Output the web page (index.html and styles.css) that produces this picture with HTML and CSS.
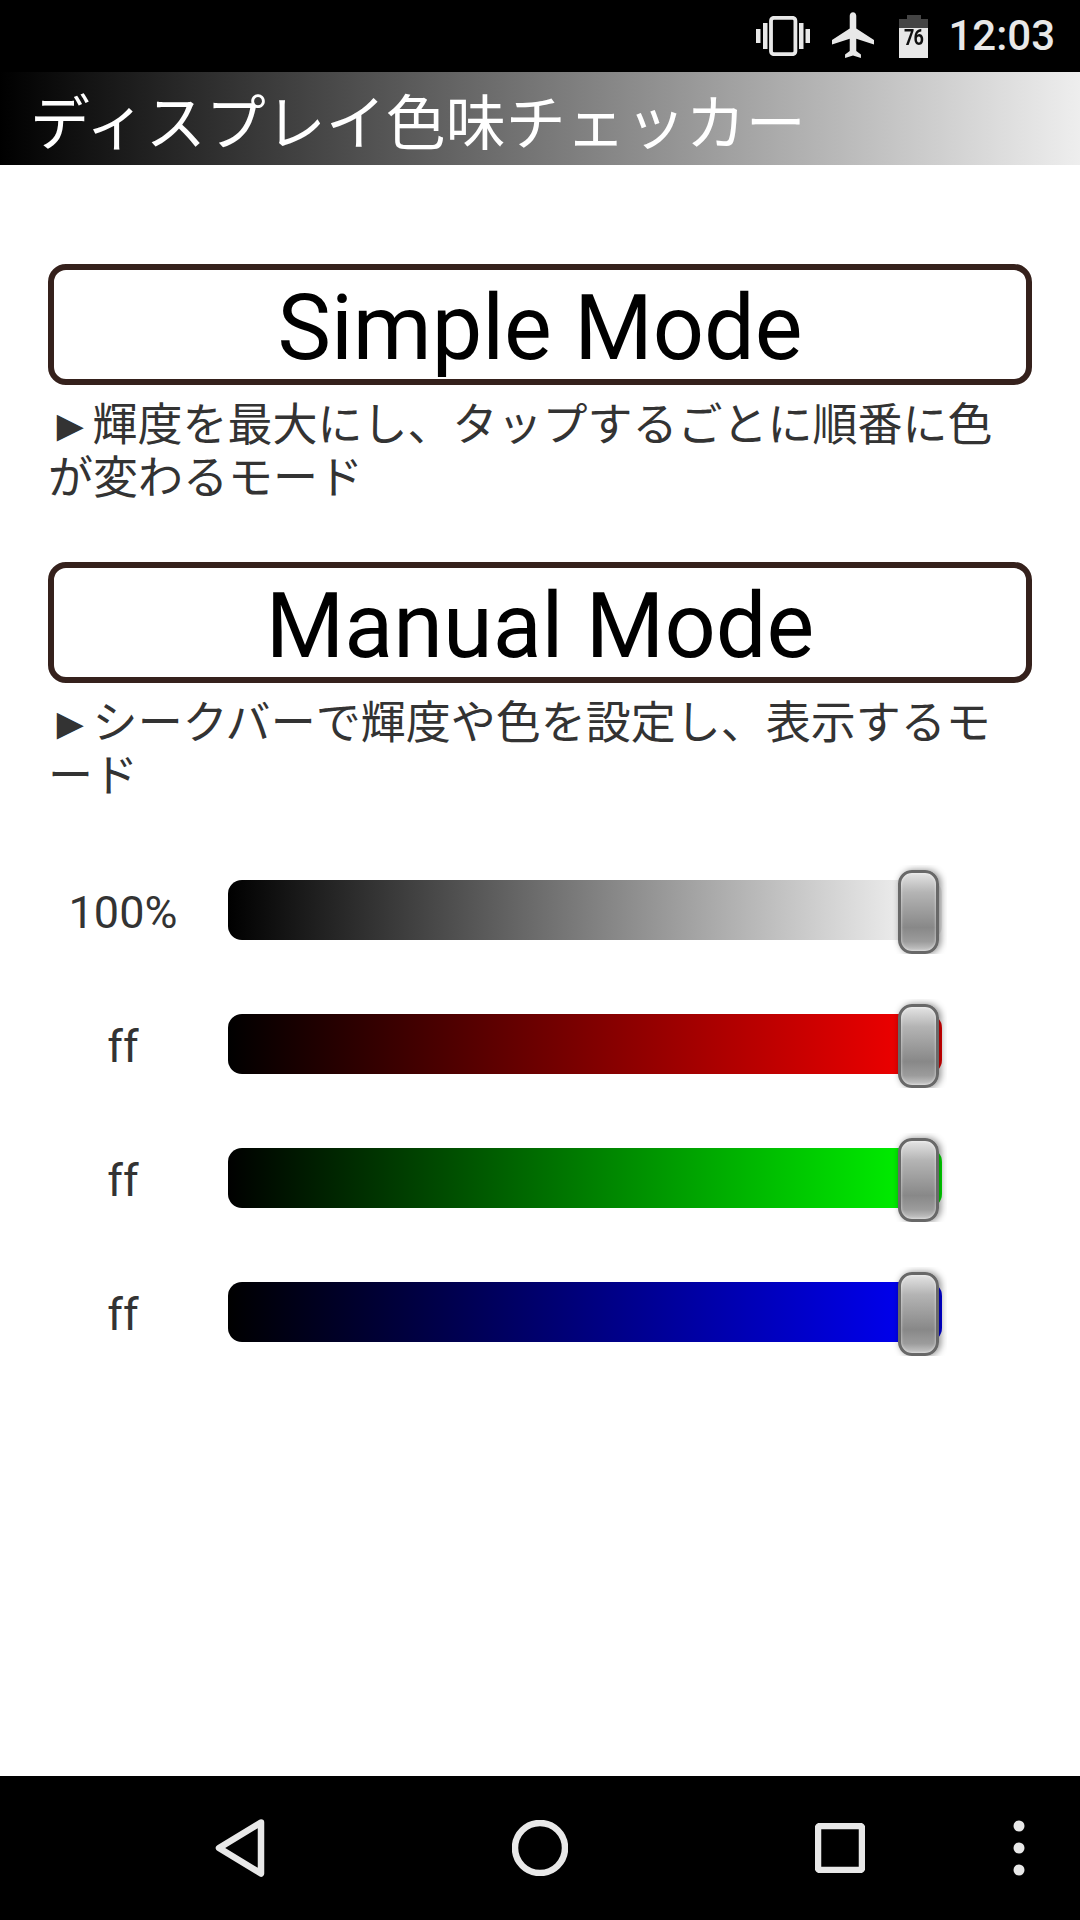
FILE: index.html
```html
<!DOCTYPE html>
<html lang="ja">
<head>
<meta charset="utf-8">
<title>ディスプレイ色味チェッカー</title>
<link rel="stylesheet" href="styles.css">
</head>
<body>
<div class="screen">
  <header class="status">
    <svg class="ic-vibrate" viewBox="0 0 54 40" width="54" height="40">
      <rect x="15" y="1.8" width="24.4" height="36.4" rx="3" fill="none" stroke="#e8e8e8" stroke-width="3.8"/>
      <rect x="7" y="7" width="4.5" height="26" fill="#e8e8e8"/>
      <rect x="43" y="7" width="4.5" height="26" fill="#e8e8e8"/>
      <rect x="0" y="13" width="4.5" height="14" fill="#e8e8e8"/>
      <rect x="49.5" y="13" width="4.5" height="14" fill="#e8e8e8"/>
    </svg>
    <svg class="ic-plane" viewBox="0 0 24 24" width="56" height="56">
      <path fill="#e8e8e8" d="M21 15.6v-1.9l-7.6-4.9V3.3c0-.8-.6-1.5-1.4-1.5s-1.4.7-1.4 1.5v5.5L3 13.7v1.9l7.6-2.4v5.2l-2 1.5v1.5l3.4-1 3.4 1v-1.5l-2-1.5v-5.2z"/>
    </svg>
    <div class="battery">
      <div class="bat-cap"></div>
      <div class="bat-top"></div>
      <div class="bat-body"><span class="bat-num">76</span></div>
    </div>
    <span class="clock">12:03</span>
  </header>
  <div class="titlebar">ディスプレイ色味チェッカー</div>
  <main class="content">
    <div class="mode-btn">Simple Mode</div>
    <p class="desc">►輝度を最大にし、タップするごとに順番に色<br>が変わるモード</p>
    <div class="mode-btn second">Manual Mode</div>
    <p class="desc">►<span class="loose">シークバー</span>で輝度や色を設定し、表示するモ<br>ード</p>
    <section class="sliders">
      <div class="row">
        <span class="val">100%</span>
        <div class="track grey"><div class="clip"><div class="thumb"></div></div></div>
      </div>
      <div class="row">
        <span class="val">ff</span>
        <div class="track red"><div class="clip"><div class="thumb"></div></div></div>
      </div>
      <div class="row">
        <span class="val">ff</span>
        <div class="track green"><div class="clip"><div class="thumb"></div></div></div>
      </div>
      <div class="row">
        <span class="val">ff</span>
        <div class="track blue"><div class="clip"><div class="thumb"></div></div></div>
      </div>
    </section>
  </main>
  <footer class="nav">
    <svg class="nav-back" viewBox="0 0 50 58" width="50" height="58">
      <path d="M46 3.5 L4 29 L46 54.5 Z" fill="none" stroke="#e8e8e8" stroke-width="6.5" stroke-linejoin="round"/>
    </svg>
    <svg class="nav-home" viewBox="0 0 56 56" width="56" height="56">
      <circle cx="28" cy="28" r="25" fill="none" stroke="#e8e8e8" stroke-width="6.5"/>
    </svg>
    <svg class="nav-recent" viewBox="0 0 50 50" width="50" height="50">
      <rect x="3" y="3" width="44" height="44" rx="2" fill="none" stroke="#e8e8e8" stroke-width="6.5"/>
    </svg>
    <svg class="nav-menu" viewBox="0 0 12 56" width="12" height="56">
      <circle cx="6" cy="6" r="5.5" fill="#e8e8e8"/>
      <circle cx="6" cy="28" r="5.5" fill="#e8e8e8"/>
      <circle cx="6" cy="50" r="5.5" fill="#e8e8e8"/>
    </svg>
  </footer>
</div>
</body>
</html>
```
FILE: styles.css
```css
* { box-sizing: border-box; }
html, body { margin: 0; padding: 0; background: #fff; }
.screen {
  width: 1080px;
  height: 1920px;
  display: flex;
  flex-direction: column;
  overflow: hidden;
  font-family: Roboto, "Noto Sans CJK JP", sans-serif;
}
.status {
  height: 72px;
  background: #000;
  display: flex;
  align-items: center;
  padding-right: 25px;
  justify-content: flex-end;
}
.ic-vibrate { margin-right: 15px; }
.ic-plane { margin-right: 18px; }
.battery {
  width: 29px;
  height: 43px;
  display: flex;
  flex-direction: column;
  align-items: center;
  margin-right: 20px;
}
.bat-cap { width: 14px; height: 4px; background: #444; }
.bat-top { width: 100%; height: 9px; background: #444; }
.bat-body {
  width: 100%;
  flex: 1;
  background: #e8e8e8;
  display: flex;
  justify-content: center;
}
.bat-num {
  font: 700 22px/20px Roboto, sans-serif;
  color: #111;
  letter-spacing: -1px;
  transform: scaleX(.82);
}
.clock {
  font: 500 42px/72px Roboto, sans-serif;
  color: #e8e8e8;
}
.titlebar {
  height: 93px;
  padding-left: 30px;
  background: linear-gradient(to right, #000, #eee);
  color: #fff;
  font: 400 60px/93px "Noto Sans CJK JP", sans-serif;
  white-space: nowrap;
}
.content {
  flex: 1;
  padding: 99px 48px 0;
}
.mode-btn {
  height: 121px;
  border: 6px solid #35211c;
  border-radius: 18px;
  text-align: center;
  color: #000;
  font: 400 90px/117px Roboto, sans-serif;
}
.second { margin-top: 61px; }
.desc {
  margin: 10px 0 0;
  color: #333;
  font: 400 45px/53px "Noto Sans CJK JP", sans-serif;
  white-space: nowrap;
}
.loose { letter-spacing: .1px; }
.sliders {
  margin-top: 81px;
  display: flex;
  flex-direction: column;
  gap: 74px;
}
.row {
  display: flex;
  align-items: center;
  height: 60px;
}
.val {
  width: 150px;
  margin-right: 30px;
  padding-top: 5px;
  text-align: center;
  color: #333;
  font: 400 45px/60px Roboto, sans-serif;
}
.track {
  position: relative;
  width: 714px;
  height: 60px;
  border-radius: 14px;
}
.grey { background: linear-gradient(to right, #000, #eee 95%); }
.red { background: linear-gradient(to right, #000, #ee0000 95%); }
.green { background: linear-gradient(to right, #000, #00ee00 95%); }
.blue { background: linear-gradient(to right, #000, #0000ee 95%); }
.clip {
  position: absolute;
  left: 650px;
  top: -15px;
  width: 69px;
  height: 89px;
  overflow: hidden;
}
.thumb {
  position: absolute;
  left: 20px;
  top: 5px;
  width: 41px;
  height: 84px;
  border: 3px solid #686868;
  border-radius: 14px;
  background: linear-gradient(to bottom, #e4e4e4 0%, #b4b4b4 25%, #888 70%, #9c9c9c 88%, #c8c8c8 100%);
  box-shadow: 2px 0 7px 0 rgba(0,0,0,.45), inset 0 0 3px rgba(255,255,255,.7);
  filter: blur(.5px);
}
.nav {
  height: 144px;
  background: #000;
  position: relative;
  display: flex;
  align-items: center;
}
.nav-back { margin-left: 215px; }
.nav-home { margin-left: 247px; }
.nav-recent { margin-left: 247px; }
.nav-menu { margin-left: 148px; }
```
